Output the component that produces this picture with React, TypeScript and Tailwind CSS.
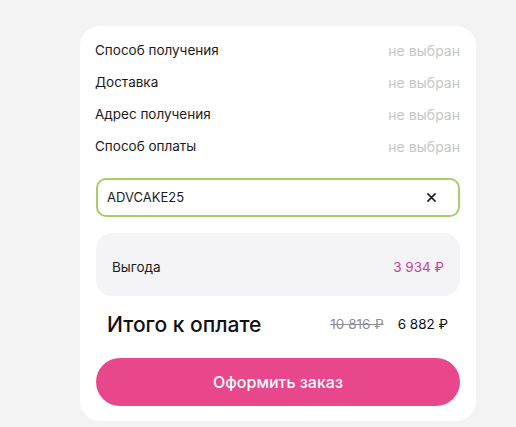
import React from 'react';

const rows = [
  { label: 'Способ получения', value: 'не выбран' },
  { label: 'Доставка', value: 'не выбран' },
  { label: 'Адрес получения', value: 'не выбран' },
  { label: 'Способ оплаты', value: 'не выбран' },
];

const App: React.FC = () => {
  return (
    <div
      className="w-[516px] h-[427px] bg-[#f3f3f4] pt-[26px] pl-[80px]"
      style={{ fontFamily: 'Inter, "Noto Sans", sans-serif' }}
    >
      <div className="w-[396px] h-[395px] bg-white rounded-[20px] px-4 pt-2 pb-[15px] flex flex-col">
        {/* Order parameters */}
        <div className="flex flex-col">
          {rows.map((row) => (
            <div key={row.label} className="h-8 flex items-center justify-between">
              <span className="text-[13.5px] text-[#1b1b1b] -ml-px">{row.label}</span>
              <span className="text-[14px] text-[#c6c6c6]">{row.value}</span>
            </div>
          ))}
        </div>

        {/* Promo code */}
        <div className="mt-4 h-[39px] border-2 border-[#a3cf68] rounded-[10px] flex items-center justify-between pl-[9px] pr-[22px]">
          <span className="text-[13px] text-[#1b1b1b]">ADVCAKE25</span>
          <button className="text-[#1b1b1b]">
            <svg width="9" height="9" viewBox="0 0 10 10" fill="none">
              <path d="M1 1L9 9M9 1L1 9" stroke="currentColor" strokeWidth="1.7" strokeLinecap="round" />
            </svg>
          </button>
        </div>

        {/* Discount */}
        <div className="mt-4 h-[63px] bg-[#f4f3f5] rounded-[16px] flex items-center justify-between px-4 pt-[5px]">
          <span className="text-[13.5px] text-[#1b1b1b]">Выгода</span>
          <span className="text-[13.5px] text-[#c6429f]">3 934 ₽</span>
        </div>

        {/* Total */}
        <div className="h-[62px] flex items-center justify-between pl-[11px] pr-3 pb-[5px]">
          <span className="text-[21px] font-medium text-[#111]">Итого к оплате</span>
          <div className="flex items-center gap-[14px] text-[13.5px]">
            <span className="text-[#8d8d8d] line-through">10 816 ₽</span>
            <span className="text-[#111]">6 882 ₽</span>
          </div>
        </div>

        {/* Submit */}
        <button className="h-12 rounded-full bg-[#e8488b] text-white text-[16px] font-medium">
          Оформить заказ
        </button>
      </div>
    </div>
  );
};

export default App;
